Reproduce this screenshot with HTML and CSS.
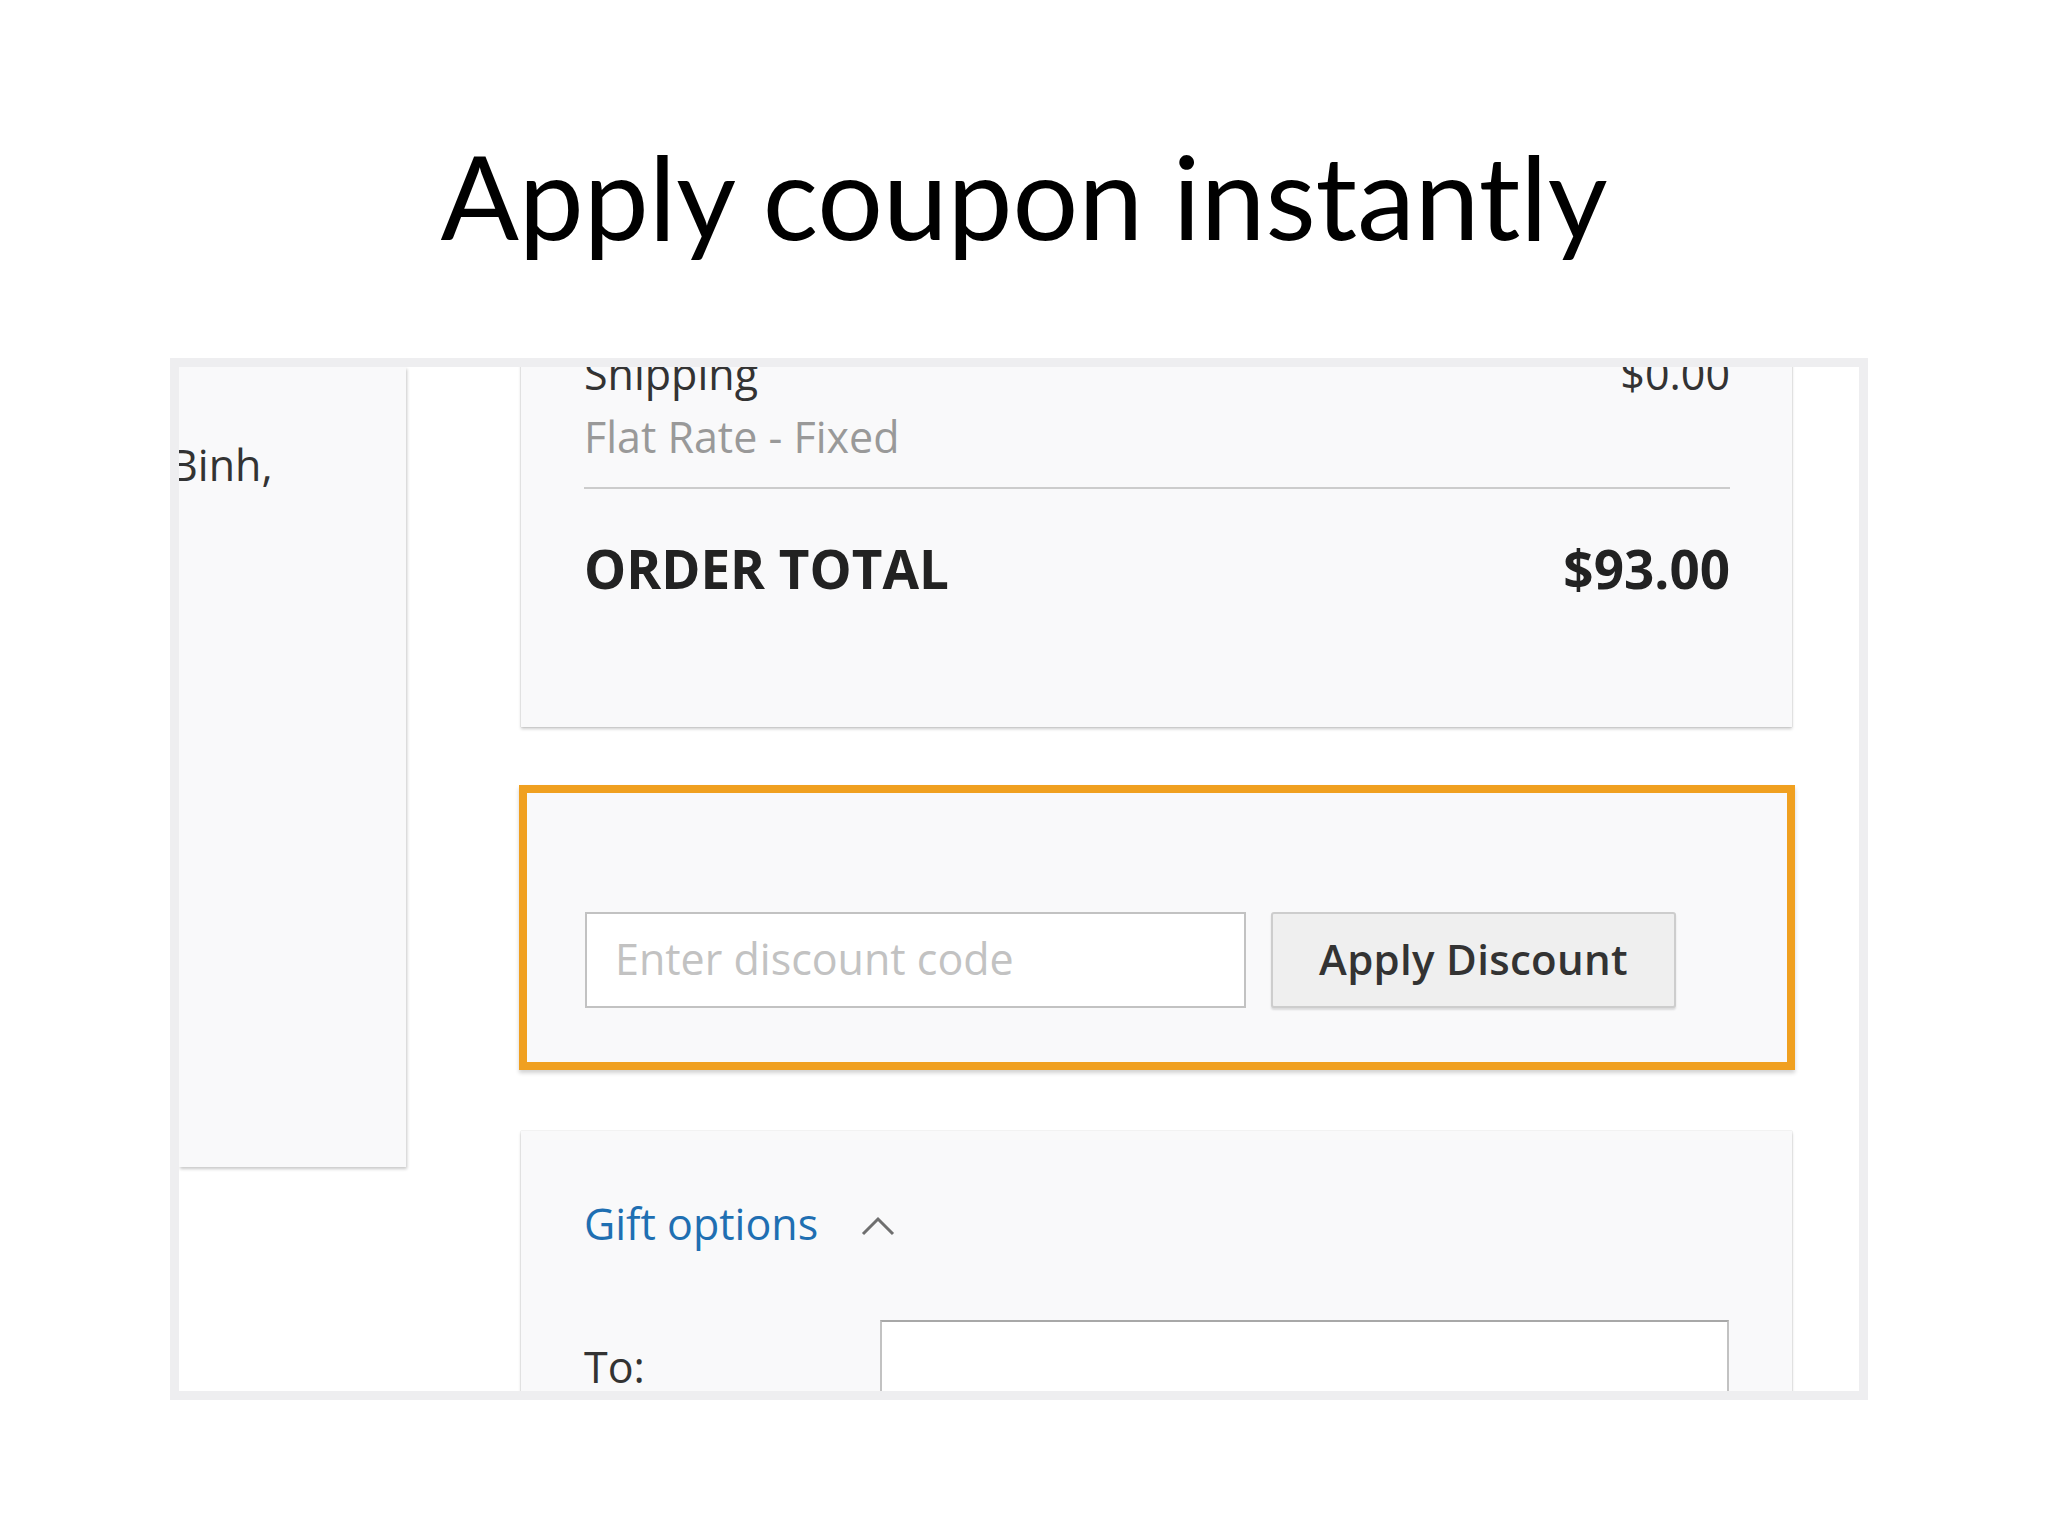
FILE: index.html
```html
<!DOCTYPE html>
<html lang="en">
<head>
<meta charset="utf-8">
<title>Apply coupon instantly</title>
<link rel="stylesheet" href="styles.css">
</head>
<body>
<div class="slide">
  <h1 class="title">Apply coupon instantly</h1>
  <div class="frame">
    <aside class="side-panel">
      <div class="side-text">Binh,</div>
    </aside>
    <main class="cards">
      <section class="card totals">
        <div class="row">
          <span class="label">Shipping</span>
          <span class="amount">$0.00</span>
        </div>
        <div class="row sub">Flat Rate - Fixed</div>
        <div class="divider"></div>
        <div class="row grand">
          <span>ORDER TOTAL</span>
          <span>$93.00</span>
        </div>
      </section>
      <section class="card discount">
        <div class="discount-form">
          <div class="code-input">Enter discount code</div>
          <div class="apply-btn">Apply Discount</div>
        </div>
      </section>
      <section class="card gift">
        <div class="gift-head">
          <span class="gift-link">Gift options</span>
          <svg class="chevron" width="36" height="22" viewBox="0 0 36 22"><path d="M3 19 L18 4 L33 19" fill="none" stroke="#6f6f6f" stroke-width="3"/></svg>
        </div>
        <div class="gift-row">
          <span class="gift-label">To:</span>
          <div class="gift-input"></div>
        </div>
      </section>
    </main>
  </div>
</div>
</body>
</html>
```

FILE: styles.css
```css
* { box-sizing: border-box; }
html, body { margin: 0; padding: 0; background: #ffffff; }
.slide {
  width: 2048px;
  height: 1536px;
  overflow: hidden;
  background: #ffffff;
}
.title {
  margin: 0;
  padding-top: 129px;
  height: 358px;
  font-family: Lato, "Open Sans", sans-serif;
  font-weight: 400;
  font-size: 116px;
  line-height: 134px;
  text-align: center;
  color: #000000;
}
.frame {
  margin-left: 170px;
  width: 1698px;
  height: 1042px;
  border: 9px solid #eeeef0;
  overflow: hidden;
  background: #ffffff;
  display: flex;
  align-items: flex-start;
  font-family: "Open Sans", sans-serif;
  color: #333333;
}
.side-panel {
  width: 227px;
  height: 800px;
  flex: none;
  background: #f9f9fa;
  box-shadow: 1px 2px 3px rgba(0,0,0,0.22);
  padding-top: 66px;
}
.side-text {
  margin-left: -9px;
  font-size: 43px;
  line-height: 63px;
  color: #333;
  white-space: nowrap;
}
.cards {
  margin-left: 115px;
  width: 1271px;
  flex: none;
  display: flex;
  flex-direction: column;
}
.card {
  background: #f9f9fa;
  box-shadow: 0 2px 3px rgba(0,0,0,0.2), 0 0 1px rgba(0,0,0,0.25);
}
.totals {
  margin-top: -25px;
  padding: 0 62px 122px 63px;
}
.row {
  display: flex;
  justify-content: space-between;
  font-size: 43px;
  line-height: 63px;
  white-space: nowrap;
}
.sub { color: #999999; }
.divider {
  margin-top: 19px;
  height: 2px;
  background: #cccccc;
}
.grand {
  margin-top: 44px;
  font-size: 53px;
  line-height: 72px;
  font-weight: 700;
  color: #222;
}
.discount {
  margin: 58px -3px 0 -2px;
  height: 285px;
  border: 8px solid #f0a020;
  padding: 119px 0 0 58px;
  box-shadow: 0 3px 4px rgba(0,0,0,0.18);
}
.discount-form {
  display: flex;
  gap: 25px;
}
.code-input {
  width: 661px;
  height: 96px;
  background: #ffffff;
  border: 2px solid #c2c2c2;
  padding-left: 28px;
  font-size: 43px;
  line-height: 90px;
  color: #c2c2c2;
  white-space: nowrap;
}
.apply-btn {
  width: 405px;
  height: 96px;
  background: #efefef;
  border: 2px solid #cdcdcd;
  border-radius: 3px;
  box-shadow: 0 2px 2px rgba(0,0,0,0.12);
  font-size: 42px;
  font-weight: 600;
  line-height: 90px;
  letter-spacing: 0.3px;
  text-align: center;
  color: #333;
  white-space: nowrap;
}
.gift {
  margin-top: 61px;
  height: 400px;
  padding: 61px 63px 0 63px;
}
.gift-head {
  display: flex;
  align-items: center;
  gap: 42px;
  height: 63px;
}
.gift-link {
  font-size: 43px;
  line-height: 63px;
  color: #1f6fb2;
  white-space: nowrap;
}
.chevron { display: block; margin-top: 4px; }
.gift-row {
  margin-top: 65px;
  display: flex;
}
.gift-label {
  width: 296px;
  flex: none;
  padding-top: 15px;
  font-size: 43px;
  line-height: 63px;
}
.gift-input {
  width: 849px;
  height: 96px;
  background: #ffffff;
  border: 2px solid #c2c2c2;
  border-top-color: #a8a8a8;
}
```
